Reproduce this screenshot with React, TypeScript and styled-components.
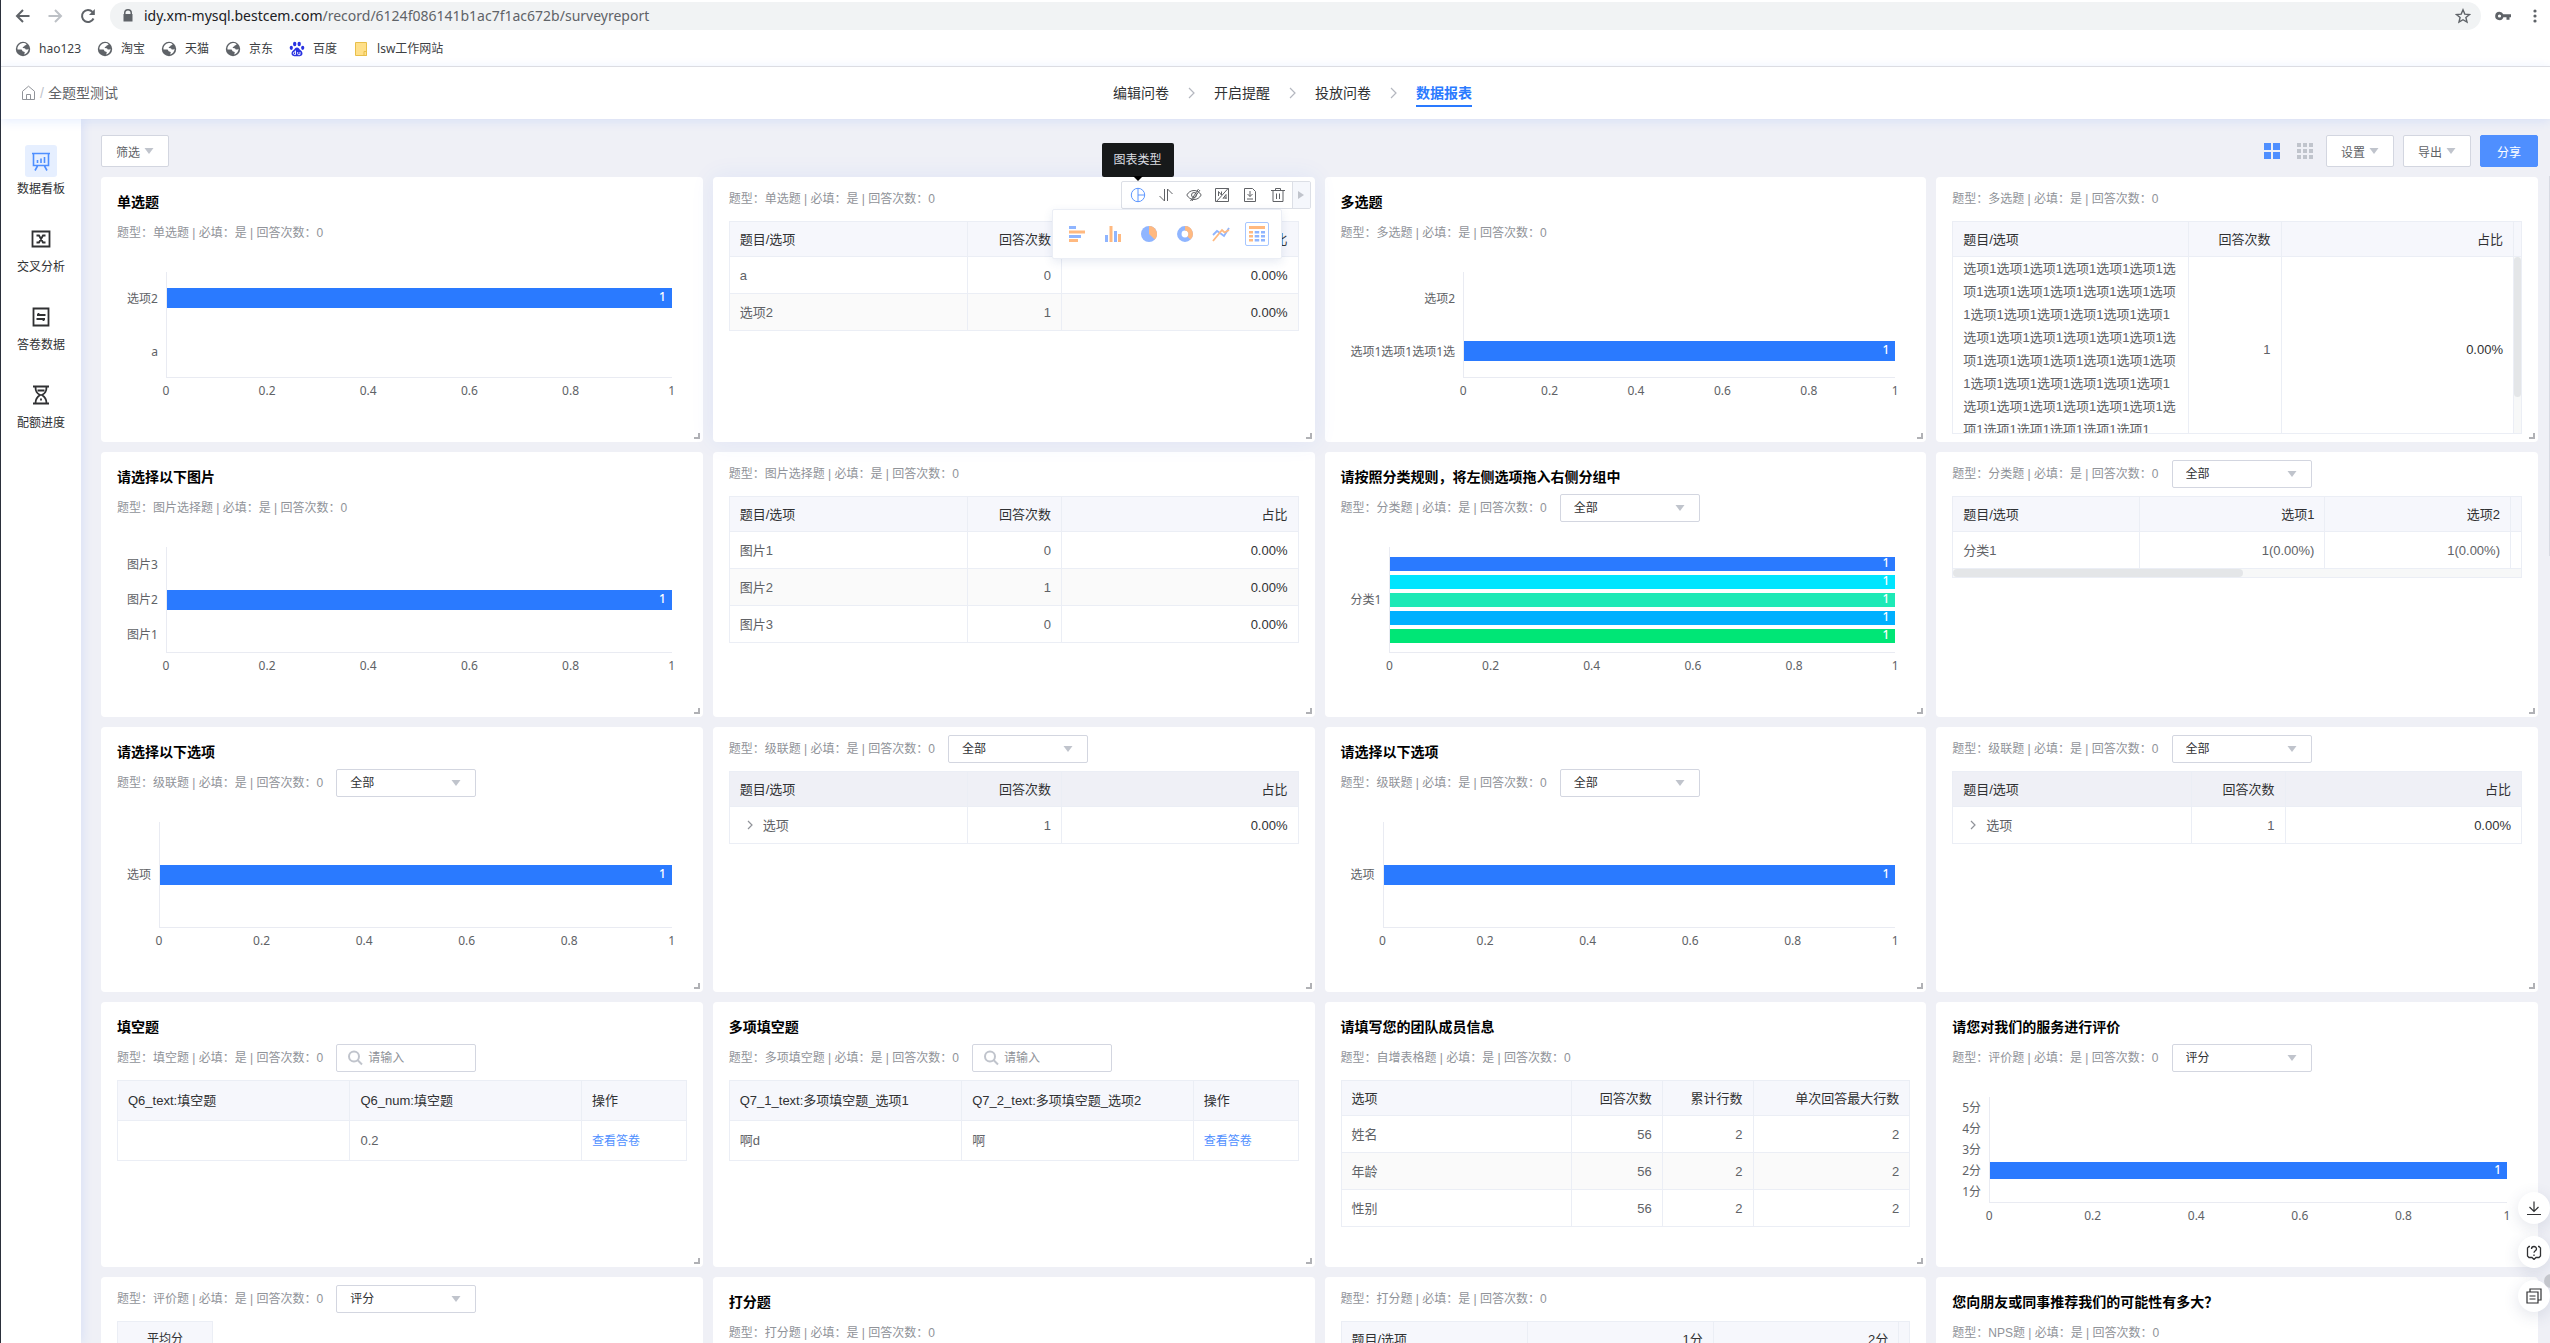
import React from "react";
import styled, { createGlobalStyle, css } from "styled-components";

const arial = `"Liberation Sans", "Noto Sans CJK SC", sans-serif`;
const humanist = `"Noto Sans", "Noto Sans CJK SC", sans-serif`;

const Global = createGlobalStyle`
  * { box-sizing: border-box; }
  html, body { margin: 0; padding: 0; }
  body { font-family: ${arial}; font-size: 12px; color: #303133; background: #fff; overflow: hidden; }
  button, input, select { font: inherit; color: inherit; margin: 0; }
  button { cursor: pointer; padding: 0; border: 0; background: none; }
  a { text-decoration: none; color: inherit; }
  svg { display: block; flex: none; }
`;

/* ---------- shell ---------- */

const Page = styled.div`
  height: 100vh;
  display: flex;
  flex-direction: column;
  border-left: 1px solid #2b303b;
`;

const AddressRow = styled.div`
  display: flex;
  align-items: center;
  height: 32px;
  padding: 0 11px 0 13px;
  gap: 16px;
  color: #5f6368;
`;

const Pill = styled.div`
  flex: 1;
  display: flex;
  align-items: center;
  gap: 10px;
  height: 28px;
  margin: 0 -2px;
  padding: 0 10px 0 12px;
  border-radius: 14px;
  background: #f1f3f4;
`;

const BrowserActions = styled.div`
  display: flex;
  align-items: center;
  gap: 20px;
`;

const UrlInput = styled.div`
  flex: 1;
  font-family: ${humanist};
  font-size: 14px;
  line-height: 20px;
  color: #5f6368;
  b { font-weight: 400; color: #202124; }
`;

const Bookmarks = styled.nav`
  display: flex;
  align-items: center;
  gap: 16px;
  height: 34px;
  padding: 0 14px;
  font-family: ${humanist};
  color: #3c4043;
  a { display: flex; align-items: center; gap: 8px; line-height: 16px; }
`;

const Header = styled.header`
  position: relative;
  z-index: 3;
  display: grid;
  grid-template-columns: 1fr auto 1fr;
  align-items: center;
  height: 53px;
  padding-left: 20px;
  border-top: 1px solid #dcdde3;
  background: #fff;
  box-shadow: 0 2px 10px rgba(42, 110, 255, 0.12);
`;

const Crumbs = styled.div`
  display: flex;
  align-items: center;
  gap: 4px;
  font-size: 14px;
  line-height: 20px;
  color: #606266;
  span { color: #c0c4cc; }
`;

const Steps = styled.nav`
  display: flex;
  align-items: center;
  gap: 19px;
  margin-left: 14px;
  font-size: 14px;
`;

const Step = styled.a<{ $on?: boolean }>`
  line-height: 22px;
  padding: 3px 0 1px;
  border-bottom: 2px solid ${(p) => (p.$on ? "#2a7aff" : "transparent")};
  color: ${(p) => (p.$on ? "#2a7aff" : "#303133")};
  font-weight: ${(p) => (p.$on ? 700 : 400)};
`;

const Body = styled.div`
  flex: 1;
  min-height: 0;
  display: flex;
  overflow: hidden;
`;

const Side = styled.nav`
  position: relative;
  z-index: 2;
  display: flex;
  flex-direction: column;
  gap: 26px;
  width: 80px;
  flex: none;
  padding-top: 26px;
  background: #fff;
  box-shadow: 2px 0 10px rgba(42, 110, 255, 0.1);
`;

const SideItem = styled.a<{ $on?: boolean }>`
  display: flex;
  flex-direction: column;
  align-items: center;
  gap: 4px;
  line-height: 16px;
  color: #303133;
  i {
    display: grid;
    place-items: center;
    width: 32px;
    height: 32px;
    border-radius: 3px;
    background: ${(p) => (p.$on ? "#e6efff" : "none")};
    color: ${(p) => (p.$on ? "#4f8fff" : "#303133")};
  }
`;

const Main = styled.main`
  flex: 1;
  min-width: 0;
  padding: 16px 12px 0 20px;
  background: #eff0f6;
`;

const Toolbar = styled.div`
  display: flex;
  align-items: center;
  gap: 9px;
  margin-bottom: 10px;
`;

const Spacer = styled.div`
  flex: 1;
`;

const Button = styled.button<{ $primary?: boolean }>`
  display: flex;
  align-items: center;
  justify-content: center;
  gap: 4px;
  min-width: ${(p) => (p.$primary ? 58 : 68)}px;
  height: 32px;
  border: 1px solid ${(p) => (p.$primary ? "#4f8fff" : "#d3d6e0")};
  border-radius: 2px;
  background: ${(p) => (p.$primary ? "#4f8fff" : "#fff")};
  color: ${(p) => (p.$primary ? "#fff" : "#606266")};
`;

const IconButton = styled.button`
  display: grid;
  place-items: center;
  width: 24px;
  height: 24px;
`;

/* ---------- cards ---------- */

const Grid = styled.div`
  display: grid;
  grid-template-columns: repeat(4, minmax(0, 1fr));
  grid-auto-rows: 265px;
  gap: 10px;
`;

const CardBox = styled.section<{ $active?: boolean }>`
  position: relative;
  padding: 6px 16px 0;
  border-radius: 4px;
  background: #fff;
  ${(p) => p.$active && css`
    z-index: 1;
    box-shadow: 0 0 24px rgba(42, 100, 255, 0.08);
  `}
`;

const Title = styled.h2`
  margin: 0;
  height: 34px;
  padding-top: 4px;
  font-size: 14px;
  line-height: 30px;
  font-weight: 700;
  color: #000;
`;

const MetaRow = styled.div`
  display: flex;
  align-items: center;
  gap: 13px;
  height: 32px;
  margin-bottom: 6px;
  color: #909399;
  white-space: pre;
`;

const Meta = styled.span`
  line-height: 16px;
  padding-bottom: 1px;
`;

const Grip = styled.span`
  position: absolute;
  right: 3px;
  bottom: 3px;
  width: 6px;
  height: 6px;
  border: solid #b0b1b5;
  border-width: 0 2px 2px 0;
`;

const SelectBox = styled.label`
  display: flex;
  align-items: center;
  width: 140px;
  height: 28px;
  padding-right: 14px;
  border: 1px solid #d3d6e0;
  border-radius: 2px;
  background: #fff;
  color: #303133;
  select {
    flex: 1;
    min-width: 0;
    height: 26px;
    padding: 0 0 0 13px;
    border: 0;
    outline: 0;
    appearance: none;
    background: transparent;
  }
`;

const SearchBox = styled.label`
  display: flex;
  align-items: center;
  gap: 4px;
  width: 140px;
  height: 28px;
  padding: 0 9px;
  border: 1px solid #d3d6e0;
  border-radius: 2px;
  input {
    flex: 1;
    min-width: 0;
    padding: 0;
    border: 0;
    outline: 0;
    background: none;
  }
  input::placeholder { color: #909399; opacity: 1; }
`;

/* ---------- tables ---------- */

const TableClip = styled.div<{ $max?: number }>`
  overflow: hidden;
  ${(p) => p.$max && css`
    max-height: ${p.$max}px;
    border-bottom: 1px solid #ebeef5;
  `}
`;

const TableEl = styled.table<{ $tall?: boolean; $dark?: boolean; $narrow?: boolean }>`
  table-layout: fixed;
  width: ${(p) => (p.$narrow ? "96px" : "100%")};
  border-collapse: separate;
  border-spacing: 0;
  border: solid #ebeef5;
  border-width: 1px 0 0 1px;
  font-size: 13px;
  line-height: 23px;
  color: #606266;
  th, td {
    height: ${(p) => (p.$tall ? 40 : 37)}px;
    padding: 0 10px;
    border: solid #ebeef5;
    border-width: 0 1px 1px 0;
    font-weight: 400;
    text-align: left;
    white-space: nowrap;
    overflow: hidden;
  }
  th {
    height: ${(p) => (p.$tall ? 40 : 35)}px;
    color: #303133;
    background: ${(p) => (p.$dark ? "#eff0f6" : "#f6f7fc")};
  }
`;

const Tr = styled.tr<{ $stripe?: boolean }>`
  background: ${(p) => (p.$stripe ? "#fafafa" : "#fff")};
`;

const Cell = styled.td<{ $right?: boolean; $strong?: boolean; $wrap?: boolean; $bar?: boolean }>`
  && {
    ${(p) => p.$right && "text-align: right;"}
    ${(p) => p.$strong && "color: #303133;"}
    ${(p) => p.$wrap && "white-space: normal; word-break: break-all;"}
    ${(p) => p.$bar && "padding: 0; vertical-align: top; background: #f7f8f8;"}
  }
`;

const HeadCell = styled.th<{ $mode?: string }>`
  && {
    ${(p) => p.$mode === "right" && "text-align: right;"}
    ${(p) => p.$mode === "center" && "text-align: center; font-size: 12px;"}
    ${(p) => p.$mode === "blank" && "padding: 0;"}
  }
`;

const VThumb = styled.div`
  height: 140px;
  border-radius: 4px;
  background: #e4e6e8;
`;

const HTrack = styled.div`
  height: 9px;
  border: solid #ebeef5;
  border-width: 0 1px 1px;
  background: #f7f8f8;
  &::before {
    content: "";
    display: block;
    width: 51%;
    height: 8px;
    border-radius: 4px;
    background: #e4e6e8;
  }
`;

const Link = styled.a`
  font-size: 12px;
  color: #4f8fff;
`;

const Expand = styled.span`
  display: flex;
  align-items: center;
  gap: 10px;
  padding-left: 7px;
`;

/* ---------- charts ---------- */

const ChartBox = styled.div`
  display: grid;
  grid-template-columns: auto minmax(0, 1fr);
  grid-template-rows: 106px auto;
  column-gap: 8px;
  margin: 23px 15px 0 10px;
  font-family: ${humanist};
  color: #606266;
`;

const Labels = styled.div`
  display: flex;
  flex-direction: column;
  text-align: right;
  span { flex: 1; display: flex; align-items: center; justify-content: flex-end; line-height: 16px; }
`;

const Plot = styled.div`
  display: flex;
  flex-direction: column;
  border: solid #e9ebf2;
  border-width: 0 0 1px 1px;
`;

const Category = styled.div`
  flex: 1;
  min-height: 0;
  display: flex;
  flex-direction: column;
  justify-content: center;
  gap: 4px;
`;

const Bar = styled.div<{ $color: string; $h: number }>`
  height: ${(p) => p.$h}px;
  padding-right: 6px;
  background: ${(p) => p.$color};
  color: #fff;
  text-align: right;
  font-weight: 500;
  line-height: ${(p) => p.$h - 2}px;
`;

const Ticks = styled.div`
  grid-column: 2;
  display: flex;
  justify-content: space-between;
  padding-top: 4px;
  line-height: 18px;
  span { width: 0; display: flex; justify-content: center; }
`;

/* ---------- overlays ---------- */

const Actions = styled.div`
  position: absolute;
  top: 4px;
  right: 4px;
  z-index: 2;
  display: flex;
  height: 28px;
  padding-left: 2px;
  border: 1px solid #dcdfe6;
  border-radius: 2px;
  background: #fff;
  color: #606266;
  button { width: 28px; display: grid; place-items: center; }
  button:last-child { width: 18px; background: #f5f7fc; border-left: 1px solid #dcdfe6; }
`;

const Tip = styled.div`
  position: absolute;
  top: -34px;
  right: 141px;
  z-index: 4;
  width: 72px;
  height: 34px;
  border-radius: 2px;
  background: #17191a;
  color: #dcdee2;
  line-height: 34px;
  text-align: center;
  &::after {
    content: "";
    position: absolute;
    left: 31px;
    top: 33px;
    border: 5px solid transparent;
    border-top-color: #000;
    border-bottom: 0;
  }
`;

const TypeMenu = styled.div`
  position: absolute;
  top: 32px;
  right: 33px;
  z-index: 3;
  display: flex;
  align-items: center;
  gap: 12px;
  height: 50px;
  padding: 0 12px;
  border: 1px solid #ebeef5;
  border-radius: 2px;
  background: #fff;
  box-shadow: 0 3px 10px rgba(60, 90, 160, 0.12);
`;

const TypeButton = styled.button<{ $on?: boolean }>`
  display: grid;
  place-items: center;
  width: 24px;
  height: 24px;
  border: 1px solid ${(p) => (p.$on ? "#a6c6ff" : "transparent")};
  border-radius: 2px;
`;

const Floats = styled.div`
  position: fixed;
  right: 0;
  bottom: 31px;
  z-index: 5;
  display: flex;
  flex-direction: column;
  gap: 12px;
  button {
    display: grid;
    place-items: center;
    width: 32px;
    height: 32px;
    border-radius: 16px;
    background: #fff;
    color: #303133;
    box-shadow: 0 4px 16px rgba(60, 70, 110, 0.14);
  }
`;

const CloseDot = styled.span`
  position: fixed;
  right: -8px;
  bottom: 55px;
  z-index: 6;
  width: 14px;
  height: 14px;
  border-radius: 7px;
  background: #c4c6cc;
`;

const ScrollHint = styled.span`
  position: fixed;
  right: 0;
  top: 176px;
  width: 1px;
  height: 380px;
  background: #d8dae2;
`;

/* ---------- icons ---------- */

const Svg = ({ s = 16, w = s, children, ...rest }: any) => (
  <svg width={w} height={s} viewBox={`0 0 ${w} ${s}`} fill="none" stroke="currentColor" {...rest}>
    {children}
  </svg>
);

const Caret = () => (
  <Svg w={10} s={6} stroke="none" fill="#c0c4cc"><path d="M0.5 0h9L5 6z" /></Svg>
);
const Chevron = () => (
  <Svg w={7} s={12} stroke="#b4b7bf" strokeWidth="1.2"><path d="M1 1l5 5-5 5" /></Svg>
);
const SmallChevron = () => (
  <Svg w={6} s={10} stroke="#909399" strokeWidth="1.2"><path d="M1 1l4 4-4 4" /></Svg>
);
const Globe = () => (
  <Svg w={16} s={16} stroke="none">
    <circle cx="8" cy="8" r="7.2" fill="#5f6368" />
    <path fill="#fff" d="M7 2.3c1.6-.5 3.6 0 4.6 1.2-.6.8-1.9.7-2.2 1.6-.2.9-1.6.6-1.7 1.5 0 .8 1.2.6 2 .6.9.1.6 1.3 1.5 1.4.9 0 1.9-.4 2.4-.9-.1 2.8-1.9 5.2-4.5 5.8.3-1.2 1-1.6.5-2.4-.5-.9-2.1-.4-2.3-1.4-.1-.9-.6-1.3-1.6-1.3H2.5C2.1 5.6 4.2 3 7 2.3z" />
  </Svg>
);
const Paw = () => (
  <Svg w={16} s={16} stroke="none" fill="#2932e1">
    <ellipse cx="5.7" cy="3" rx="1.7" ry="2.3" /><ellipse cx="10.2" cy="3" rx="1.7" ry="2.3" />
    <ellipse cx="2.3" cy="6.8" rx="1.6" ry="2.1" /><ellipse cx="13.7" cy="6.8" rx="1.6" ry="2.1" />
    <path d="M8 6.5c1.8 0 2.4 1.8 3.6 2.8 1.3 1 2.2 2.4 1.8 4-.5 1.8-2.4 2.2-5.4 2-3 .2-4.9-.2-5.4-2-.4-1.6.5-3 1.8-4C5.6 8.3 6.2 6.5 8 6.5z" />
    <path d="M6.5 9.5v4H5.3a1.3 1.3 0 010-2.5h1.2M8.7 11v1.8c0 .5.3.8.7.8H11V11" fill="none" stroke="#fff" strokeWidth=".9" />
  </Svg>
);
const Home = () => (
  <Svg w={15} s={16} stroke="#909399"><path d="M1.5 6.3L7.5 1.2l6 5.1v8.2h-12zM5.5 14.5v-5h4v5" /></Svg>
);
const Magnifier = () => (
  <Svg s={18} stroke="#c0c4cc" strokeWidth="2"><circle cx="8" cy="7.5" r="5" /><path d="M11.5 11l4.5 4.5" /></Svg>
);

/* ---------- components ---------- */

type Tbl = {
  cols: number[];
  head: string[];
  rows?: string[][];
  right?: number[];
  strong?: number;
  tall?: boolean;
  dark?: boolean;
  expand?: boolean;
  narrow?: boolean;
  vbar?: boolean;
  hbar?: boolean;
};

const DataTable = ({ cols, head, rows = [], right = [], strong, tall, dark, expand, narrow, vbar, hbar }: Tbl) => {
  const total = cols.reduce((a, b) => a + b, 0);
  return (
    <>
      <TableClip $max={vbar ? 213 : undefined}>
        <TableEl $tall={tall} $dark={dark} $narrow={narrow}>
          <colgroup>{cols.map((c, i) => <col key={i} style={{ width: `${(c / total) * 100}%` }} />)}</colgroup>
          <thead>
            <tr>
              {head.map((h, i) => (
                <HeadCell key={i} $mode={!h ? "blank" : narrow ? "center" : right.includes(i) ? "right" : ""}>{h}</HeadCell>
              ))}
            </tr>
          </thead>
          <tbody>
            {rows.map((r, ri) => (
              <Tr key={ri} $stripe={ri % 2 === 1}>
                {r.map((c, i) => (
                  <Cell key={i} $right={right.includes(i)} $strong={i === strong} $wrap={vbar && i === 0} $bar={vbar && i === 3}>
                    {vbar && i === 3 ? <VThumb /> : c === "查看答卷" ? <Link href="#">{c}</Link> : expand && i === 0 ? (
                      <Expand><SmallChevron />{c}</Expand>
                    ) : c}
                  </Cell>
                ))}
              </Tr>
            ))}
          </tbody>
        </TableEl>
      </TableClip>
      {hbar && <HTrack />}
    </>
  );
};

const BLUE = "#2a7aff";

type Cat = { label: string; bars?: string[] };

const Chart = ({ cats }: { cats: Cat[] }) => (
  <ChartBox>
    <Labels>{cats.map((c) => <span key={c.label}>{c.label}</span>)}</Labels>
    <Plot>
      {cats.map((c) => (
        <Category key={c.label}>
          {(c.bars || []).map((color) => (
            <Bar key={color} $color={color} $h={c.bars!.length > 1 ? 14 : cats.length > 4 ? 17 : 20}>1</Bar>
          ))}
        </Category>
      ))}
    </Plot>
    <Ticks>{["0", "0.2", "0.4", "0.6", "0.8", "1"].map((t) => <span key={t}>{t}</span>)}</Ticks>
  </ChartBox>
);

type CardProps = {
  title?: string;
  type: string;
  select?: string;
  search?: boolean;
  active?: boolean;
  children?: React.ReactNode;
};

const Card = ({ title, type, select, search, active, children }: CardProps) => (
  <CardBox $active={active}>
    {title && <Title>{title}</Title>}
    <MetaRow>
      <Meta>{`题型：${type} | 必填：是 | 回答次数：0`}</Meta>
      {select && (
        <SelectBox>
          <select aria-label="筛选维度" defaultValue={select}><option>{select}</option></select>
          <Caret />
        </SelectBox>
      )}
      {search && (
        <SearchBox>
          <Magnifier />
          <input type="text" aria-label="搜索" placeholder="请输入" />
        </SearchBox>
      )}
    </MetaRow>
    {children}
    {active && <HoverTools />}
    <Grip />
  </CardBox>
);

const B = "#8fb5ff";
const O = "#ffb980";

const HoverTools = () => (
  <>
    <Tip role="tooltip">图表类型</Tip>
    <Actions>
      <button aria-label="图表类型"><Svg stroke="#5c96ff"><circle cx="8" cy="8" r="6.7" /><path d="M8 1.3v13.4M8 8h6.7" /></Svg></button>
      <button aria-label="排序"><Svg><path d="M6.5 2v12L1.5 9M9.5 14V2l5 5" /></Svg></button>
      <button aria-label="隐藏"><Svg><path d="M.8 8C2.5 5 5 3.5 8 3.5S13.5 5 15.2 8C13.5 11 11 12.5 8 12.5S2.5 11 .8 8zM12.5 2l-8 12M14 3L6 14" /><circle cx="8" cy="8" r="2.5" /></Svg></button>
      <button aria-label="数据标签"><Svg><path d="M1.5 1.5h13v13h-13zM14.5 1L2 15M4.5 9V4.5l3 3.5V4.5M9 11.5l3-4v4.5M9 11h3.5" /></Svg></button>
      <button aria-label="下载"><Svg><path d="M2.5 1.5h8l3 3v10h-11zM8 4v5.5M5.5 7L8 9.5 10.5 7M5 12h6" /></Svg></button>
      <button aria-label="删除"><Svg><path d="M1 3.5h14M5.5 3.5v-2h5v2M3 3.5v11h10v-11M6.5 6.5v5.5M9.5 6.5v5.5" /></Svg></button>
      <button aria-label="收起"><Svg w={6} s={8} stroke="none" fill="#c0c4cc"><path d="M0 0l6 4-6 4z" /></Svg></button>
    </Actions>
    <TypeMenu>
      <TypeButton aria-label="条形图"><Svg stroke="none"><path fill={B} d="M0 0h7v3H0zM0 9h12v3H0z" /><path fill={O} d="M0 4.5h16v3H0zM0 13h9v3H0z" /></Svg></TypeButton>
      <TypeButton aria-label="柱状图"><Svg stroke="none"><path fill={B} d="M0 9h3v7H0zM9 5h3v11H9z" /><path fill={O} d="M4.5 0h3v16h-3zM13 8h3v8h-3z" /></Svg></TypeButton>
      <TypeButton aria-label="饼图"><Svg stroke="none"><circle cx="8" cy="8" r="8" fill={B} /><path fill={O} d="M8 0a8 8 0 015.7 13.6L8 8z" /></Svg></TypeButton>
      <TypeButton aria-label="环形图"><Svg strokeWidth="4.5"><circle cx="8" cy="8" r="5.7" stroke={B} /><path stroke={O} d="M8 2.3a5.7 5.7 0 014 9.7" /></Svg></TypeButton>
      <TypeButton aria-label="折线图"><Svg w={18} s={16} strokeWidth="1.8"><path stroke={B} d="M1 9l4-4 3 2 4 3 5-8" /><path stroke={O} d="M1 15l9-11 2.5 2.5L17 4" /></Svg></TypeButton>
      <TypeButton $on aria-label="表格"><Svg stroke="none"><path fill={O} d="M0 0h16v3H0zM0 5h4v2.5H0zM0 9h4v2.5H0zM0 13h4v2.5H0z" /><path fill={B} d="M5.7 5h4.5v2.5H5.7zM5.7 9h4.5v2.5H5.7zM5.7 13h4.5v2.5H5.7zM12 5h4v2.5h-4zM12 9h4v2.5h-4zM12 13h4v2.5h-4z" /></Svg></TypeButton>
    </TypeMenu>
  </>
);

const SIDE = [
  { label: "数据看板", icon: <Svg w={20} s={20} strokeWidth="1.6"><path d="M1 2.5h18M2.5 3v11.5h15V3M6.5 15L4 19.5M13.5 15l2.5 4.5M6.5 9v3M10 7.5V12M13.5 6v6" /></Svg> },
  { label: "交叉分析", icon: <Svg w={20} s={20} strokeWidth="1.8"><path d="M1.5 2.5h17v15h-17z" /><path d="M5.5 6.5H8l4 7h2.5M14.5 6.5H12l-4 7H5.5" /></Svg> },
  { label: "答卷数据", icon: <Svg w={20} s={20} strokeWidth="1.8"><path d="M2.5 1.5h15v17h-15z" /><path d="M6 8h8.5M5.5 12H14M7.5 6v2M12.5 12v2" /></Svg> },
  { label: "配额进度", icon: <Svg w={20} s={20} strokeWidth="1.8"><path d="M2 1.5h16M2 18.5h16M4.5 2c0 5 1.5 6 4.5 8-3 2-4.5 3.5-4.5 8M15.5 2c0 5-1.5 6-4.5 8 3 2 4.5 3.5 4.5 8M6.5 5.5h7M10 13.5v2" /></Svg> },
];

const STD = [239, 94, 237];
const Q = ["题目/选项", "回答次数", "占比"];

export default function App() {
  return (
    <Page>
      <Global />
      <AddressRow>
        <Svg w={17} s={16} strokeWidth="2"><path d="M15.5 8H3M9 2L3 8l6 6" /></Svg>
        <Svg w={17} s={16} strokeWidth="2" stroke="#bdc1c6"><path d="M1.5 8H14M8 2l6 6-6 6" /></Svg>
        <Svg w={16} s={16} strokeWidth="2"><path d="M13.5 10.5A6 6 0 1112.5 4" /><path d="M14.8 1v6H9z" fill="currentColor" stroke="none" /></Svg>
        <Pill>
          <Svg w={12} s={14} fill="currentColor" stroke="none"><path d="M2 5V4a4 4 0 018 0v1h.5v7.5h-9V5zm1.5 0h5V4a2.5 2.5 0 00-5 0z" /></Svg>
          <UrlInput><b>idy.xm-mysql.bestcem.com</b>/record/6124f086141b1ac7f1ac672b/surveyreport</UrlInput>
          <Svg s={16} strokeWidth="1.4"><path d="M8 1.8l1.8 4.3 4.7.4-3.6 3 1.1 4.6L8 11.7l-4 2.4 1.1-4.6-3.6-3 4.7-.4z" /></Svg>
        </Pill>
        <BrowserActions>
          <Svg w={16} s={16} fill="currentColor" stroke="none"><path fillRule="evenodd" d="M4.5 3.8a4.2 4.2 0 013.8 2.5H16v3h-1.5v2.5h-3V9.3H8.4A4.2 4.2 0 114.5 3.8zm0 2.6a1.6 1.6 0 100 3.2 1.6 1.6 0 000-3.2z" /></Svg>
          <Svg w={8} s={16} fill="currentColor" stroke="none"><circle cx="4" cy="3" r="1.6" /><circle cx="4" cy="8" r="1.6" /><circle cx="4" cy="13" r="1.6" /></Svg>
        </BrowserActions>
      </AddressRow>
      <Bookmarks>
        <a href="#"><Globe />hao123</a>
        <a href="#"><Globe />淘宝</a>
        <a href="#"><Globe />天猫</a>
        <a href="#"><Globe />京东</a>
        <a href="#"><Paw />百度</a>
        <a href="#"><Svg w={16} s={16} fill="#ffe08a" stroke="#e8bf4a"><path d="M2.5 1.5h11v13h-11zM11 10.5h2.5v4H11z" /></Svg>lsw工作网站</a>
      </Bookmarks>
      <Header>
        <Crumbs><Home /><span>/</span>全题型测试</Crumbs>
        <Steps>
          <Step href="#">编辑问卷</Step><Chevron />
          <Step href="#">开启提醒</Step><Chevron />
          <Step href="#">投放问卷</Step><Chevron />
          <Step href="#" $on>数据报表</Step>
        </Steps>
      </Header>
      <Body>
        <Side>
          {SIDE.map((s, i) => <SideItem key={s.label} href="#" $on={i === 0}><i>{s.icon}</i>{s.label}</SideItem>)}
        </Side>
        <Main>
          <Toolbar>
            <Button>筛选<Caret /></Button>
            <Spacer />
            <IconButton aria-label="两列"><Svg stroke="none" fill="#4f8fff"><path d="M0 0h7v7H0zM9 0h7v7H9zM0 9h7v7H0zM9 9h7v7H9z" /></Svg></IconButton>
            <IconButton aria-label="三列"><Svg stroke="none" fill="#c0c4cc"><path d="M0 0h4v4H0zM6 0h4v4H6zM12 0h4v4h-4zM0 6h4v4H0zM6 6h4v4H6zM12 6h4v4h-4zM0 12h4v4H0zM6 12h4v4H6zM12 12h4v4h-4z" /></Svg></IconButton>
            <Button>设置<Caret /></Button>
            <Button>导出<Caret /></Button>
            <Button $primary>分享</Button>
          </Toolbar>
          <Grid>
            <Card title="单选题" type="单选题"><Chart cats={[{ label: "选项2", bars: [BLUE] }, { label: "a" }]} /></Card>
            <Card type="单选题" active>
              <DataTable cols={STD} head={Q} right={[1, 2]} strong={2} rows={[["a", "0", "0.00%"], ["选项2", "1", "0.00%"]]} />
            </Card>
            <Card title="多选题" type="多选题"><Chart cats={[{ label: "选项2" }, { label: "选项1选项1选项1选", bars: [BLUE] }]} /></Card>
            <Card type="多选题">
              <DataTable vbar cols={[236, 93, 233, 8]} head={[...Q, ""]} right={[1, 2]} strong={2} rows={[["选项1".repeat(50), "1", "0.00%", ""]]} />
            </Card>

            <Card title="请选择以下图片" type="图片选择题"><Chart cats={[{ label: "图片3" }, { label: "图片2", bars: [BLUE] }, { label: "图片1" }]} /></Card>
            <Card type="图片选择题">
              <DataTable cols={STD} head={Q} right={[1, 2]} strong={2} rows={[["图片1", "0", "0.00%"], ["图片2", "1", "0.00%"], ["图片3", "0", "0.00%"]]} />
            </Card>
            <Card title="请按照分类规则，将左侧选项拖入右侧分组中" type="分类题" select="全部">
              <Chart cats={[{ label: "分类1", bars: [BLUE, "#00e5ff", "#1de9b6", "#00b0ff", "#00e676"] }]} />
            </Card>
            <Card type="分类题" select="全部">
              <DataTable hbar cols={[187, 186, 186, 11]} head={["题目/选项", "选项1", "选项2", ""]} right={[1, 2]} rows={[["分类1", "1(0.00%)", "1(0.00%)", ""]]} />
            </Card>

            <Card title="请选择以下选项" type="级联题" select="全部"><Chart cats={[{ label: "选项", bars: [BLUE] }]} /></Card>
            <Card type="级联题" select="全部">
              <DataTable dark expand cols={STD} head={Q} right={[1, 2]} strong={2} rows={[["选项", "1", "0.00%"]]} />
            </Card>
            <Card title="请选择以下选项" type="级联题" select="全部"><Chart cats={[{ label: "选项", bars: [BLUE] }]} /></Card>
            <Card type="级联题" select="全部">
              <DataTable dark expand cols={STD} head={Q} right={[1, 2]} strong={2} rows={[["选项", "1", "0.00%"]]} />
            </Card>

            <Card title="填空题" type="填空题" search>
              <DataTable tall cols={[233, 232, 105]} head={["Q6_text:填空题", "Q6_num:填空题", "操作"]} rows={[["", "0.2", "查看答卷"]]} />
            </Card>
            <Card title="多项填空题" type="多项填空题" search>
              <DataTable tall cols={[233, 232, 105]} head={["Q7_1_text:多项填空题_选项1", "Q7_2_text:多项填空题_选项2", "操作"]} rows={[["啊d", "啊", "查看答卷"]]} />
            </Card>
            <Card title="请填写您的团队成员信息" type="自增表格题">
              <DataTable cols={[231, 91, 91, 157]} right={[1, 2, 3]} head={["选项", "回答次数", "累计行数", "单次回答最大行数"]} rows={[["姓名", "56", "2", "2"], ["年龄", "56", "2", "2"], ["性别", "56", "2", "2"]]} />
            </Card>
            <Card title="请您对我们的服务进行评价" type="评价题" select="评分">
              <Chart cats={[{ label: "5分" }, { label: "4分" }, { label: "3分" }, { label: "2分", bars: [BLUE] }, { label: "1分" }]} />
            </Card>

            <Card type="评价题" select="评分"><DataTable narrow cols={[96]} head={["平均分"]} /></Card>
            <Card title="打分题" type="打分题" />
            <Card type="打分题"><DataTable cols={[187, 186, 186, 11]} right={[1, 2]} head={["题目/选项", "1分", "2分", ""]} /></Card>
            <Card title="您向朋友或同事推荐我们的可能性有多大？" type="NPS题" />
          </Grid>
        </Main>
      </Body>
      <ScrollHint />
      <Floats>
        <button aria-label="下载"><Svg strokeWidth="1.2"><path d="M8 1.5V11M3.5 7L8 11.5 12.5 7M1 14.5h14" /></Svg></button>
        <button aria-label="帮助"><Svg strokeWidth="1.3"><path d="M4 2.5H3L1.5 4v8L3 13.5h3l2 2 2-2h3l1.5-1.5V4L13 2.5h-1M5.5 5a2.5 2.5 0 115 0c0 1.7-2.5 1.8-2.5 3.8M8 10.5V12" /></Svg></button>
        <button aria-label="文档"><Svg strokeWidth="1.2"><path d="M1 4h11v11H1zM4 4V1h11v11h-3M3.5 8h6M3.5 11h6" /></Svg></button>
      </Floats>
      <CloseDot />
    </Page>
  );
}
